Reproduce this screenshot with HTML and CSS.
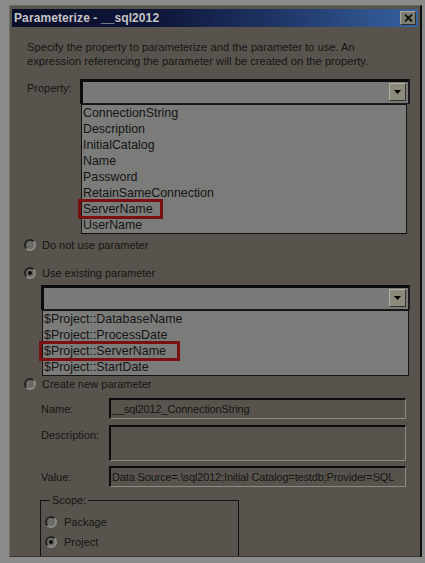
FILE: index.html
```html
<!DOCTYPE html>
<html>
<head>
<meta charset="utf-8">
<link rel="stylesheet" href="styles.css">
</head>
<body>
<div class="dialog">
  <div class="titlebar">
    <span class="title">Parameterize - __sql2012</span>
    <span class="close-btn"><svg width="9" height="8" viewBox="0 0 9 8"><path d="M1 0.5 L8 7.5 M8 0.5 L1 7.5" stroke="#111" stroke-width="1.8"/></svg></span>
  </div>
  <div class="content">
    <p class="intro">Specify the property to parameterize and the parameter to use. An<br>expression referencing the parameter will be created on the property.</p>

    <div class="prop-row">
      <span class="prop-label">Property:</span>
      <div class="combo-wrap wide">
        <div class="combo"><span class="combo-field"></span><span class="drop-btn"><svg width="7" height="4" viewBox="0 0 7 4"><path d="M0 0 H7 L3.5 4 Z" fill="#000"/></svg></span></div>
        <ul class="list">
          <li>ConnectionString</li>
          <li>Description</li>
          <li>InitialCatalog</li>
          <li>Name</li>
          <li>Password</li>
          <li>RetainSameConnection</li>
          <li class="marked"><span class="mark mark-prop"></span>ServerName</li>
          <li>UserName</li>
        </ul>
      </div>
    </div>

    <div class="radio-row first"><span class="radio"></span><span>Do not use parameter</span></div>
    <div class="radio-row second"><span class="radio checked"></span><span>Use existing parameter</span></div>

    <div class="combo-wrap param">
      <div class="combo"><span class="combo-field"></span><span class="drop-btn"><svg width="7" height="4" viewBox="0 0 7 4"><path d="M0 0 H7 L3.5 4 Z" fill="#000"/></svg></span></div>
      <ul class="list">
        <li>$Project::DatabaseName</li>
        <li>$Project::ProcessDate</li>
        <li class="marked"><span class="mark mark-param"></span>$Project::ServerName</li>
        <li>$Project::StartDate</li>
      </ul>
    </div>

    <div class="radio-row third"><span class="radio"></span><span>Create new parameter</span></div>

    <div class="field-row name-row">
      <span class="field-label">Name:</span>
      <span class="field">__sql2012_ConnectionString</span>
    </div>
    <div class="field-row desc-row">
      <span class="field-label top">Description:</span>
      <span class="field tall"></span>
    </div>
    <div class="field-row value-row">
      <span class="field-label">Value:</span>
      <span class="field">Data Source=.\sql2012;Initial Catalog=testdb;Provider=SQL</span>
    </div>

    <fieldset class="scope">
      <legend>Scope:</legend>
      <div class="radio-row pkg"><span class="radio"></span><span>Package</span></div>
      <div class="radio-row proj"><span class="radio checked"></span><span>Project</span></div>
    </fieldset>
  </div>
</div>
</body>
</html>
```

FILE: styles.css
```css
html, body {
  margin: 0;
  padding: 0;
}
body {
  background: #8b8b8a;
  width: 425px;
  height: 563px;
  overflow: hidden;
  font-family: "Liberation Sans", Arial, sans-serif;
  font-size: 11px;
  color: #151515;
}
.dialog {
  box-sizing: border-box;
  margin: 5px 0 0 9px;
  width: 413px;
  height: 552px;
  background: #58544d;
  border-left: 1px solid #6f6c66;
  border-top: 1px solid #6f6c66;
  border-right: 2px solid #0f0f0f;
  border-bottom: 1px solid #3a3833;
  padding: 3px 2px 0 2px;
  overflow: hidden;
  display: flex;
  flex-direction: column;
}
.titlebar {
  height: 18px;
  flex: none;
  width: 406px;
  background: linear-gradient(90deg, #0a0e2a 0%, #0e1538 35%, #1f3566 65%, #3762a0 100%);
  display: flex;
  align-items: center;
  justify-content: space-between;
  padding: 0 2px 0 2px;
  box-sizing: border-box;
}
.title {
  font-weight: bold;
  font-size: 12px;
  color: #c4c4c4;
  letter-spacing: 0.1px;
}
.close-btn {
  width: 16px;
  height: 14px;
  box-sizing: border-box;
  background: #7f7e74;
  border-top: 1px solid #a9a89c;
  border-left: 1px solid #a9a89c;
  border-right: 1px solid #2e2d29;
  border-bottom: 1px solid #2e2d29;
  display: flex;
  align-items: center;
  justify-content: center;
}
.content {
  position: relative;
  flex: 1;
}
.intro {
  margin: 13px 0 0 15px;
  line-height: 14px;
  font-size: 11.2px;
}
.prop-row {
  display: flex;
  margin-top: 11px;
}
.prop-label {
  width: 53px;
  padding-left: 15px;
  padding-top: 2px;
  line-height: 14px;
}
.combo-wrap.wide {
  width: 330px;
}
.combo {
  box-sizing: border-box;
  height: 25px;
  background: #797977;
  border-top: 3px solid #0c0c0c;
  border-left: 3px solid #0c0c0c;
  border-right: 2px solid #1a1a1a;
  border-bottom: 1px solid #1a1a1a;
  display: flex;
  justify-content: flex-end;
  padding: 1px 2px 2px 0;
}
.drop-btn {
  width: 17px;
  box-sizing: border-box;
  background: #8b8a7b;
  border-top: 1px solid #b2b1a3;
  border-left: 1px solid #b2b1a3;
  border-right: 1px solid #33322c;
  border-bottom: 1px solid #33322c;
  display: flex;
  align-items: center;
  justify-content: center;
}
.list {
  list-style: none;
  margin: 0 3px 0 1px;
  padding: 0;
  background: #7b7b79;
  border: 1px solid #141414;
  font-size: 12.4px;
}
.list li {
  height: 16px;
  line-height: 17px;
  padding-left: 1px;
  position: relative;
  white-space: nowrap;
}
.mark {
  position: absolute;
  top: -2px;
  height: 14px;
  border: 3px solid #7b1012;
}
.mark-prop {
  left: -4px;
  width: 79px;
}
.mark-param {
  left: -4px;
  width: 135px;
}
.radio-row {
  display: flex;
  align-items: center;
  height: 14px;
  line-height: 14px;
  padding-left: 12px;
}
.radio-row .radio {
  margin-right: 6px;
}
.radio {
  box-sizing: border-box;
  width: 12px;
  height: 12px;
  border-radius: 50%;
  background: #6d6b66;
  border: 2px solid;
  border-color: #222 #8c8b86 #8c8b86 #222;
  display: flex;
  align-items: center;
  justify-content: center;
  flex: none;
}
.radio.checked::after {
  content: "";
  width: 4px;
  height: 4px;
  border-radius: 50%;
  background: #0a0a0a;
}
.radio-row.first { margin-top: 4px; }
.radio-row.second { margin-top: 14px; }
.combo-wrap.param {
  margin: 5px 0 0 29px;
  width: 369px;
}
.combo-wrap.param .list {
  margin: 0 1px 0 1px;
}
.radio-row.third { margin-top: 1px; }
.field-row {
  display: flex;
  align-items: center;
  padding-left: 29px;
}
.field-label {
  width: 68px;
  line-height: 14px;
  flex: none;
}
.field-label.top {
  align-self: flex-start;
  padding-top: 3px;
}
.field {
  box-sizing: border-box;
  width: 297px;
  height: 21px;
  border-top: 2px solid #0c0c0c;
  border-left: 2px solid #0c0c0c;
  border-right: 1px solid #8d8b85;
  border-bottom: 1px solid #8d8b85;
  padding-left: 1px;
  line-height: 18px;
  white-space: nowrap;
  overflow: hidden;
  font-size: 11px;
  letter-spacing: -0.15px;
}
.field.tall { height: 36px; }
.name-row { margin-top: 7px; }
.desc-row { margin-top: 6px; }
.value-row { margin-top: 5px; }
.scope {
  margin: 6px 0 0 28px;
  width: 199px;
  height: 80px;
  box-sizing: border-box;
  border: 1px solid #111;
  padding: 0 0 0 4px;
}
.scope legend {
  padding: 0 2px;
  margin-left: 5px;
  line-height: 14px;
}
.scope .radio-row {
  padding-left: 0;
}
.scope .radio-row .radio { margin-right: 7px; }
.radio-row.pkg { margin-top: 8px; }
.radio-row.proj { margin-top: 6px; }
```
